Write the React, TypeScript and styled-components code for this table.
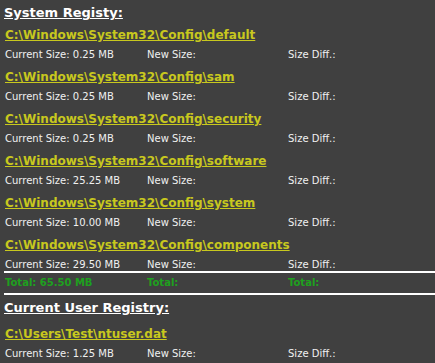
import React from "react";
import styled, { createGlobalStyle } from "styled-components";

const Global = createGlobalStyle`
  html, body { margin: 0; padding: 0; background: #404040; }
  body { font-family: "DejaVu Sans", Verdana, sans-serif; color: #f0f0f0; }
`;

const Page = styled.div`
  padding: 0 0 0 4px;
  width: 435px;
  box-sizing: border-box;
  display: flex;
  flex-direction: column;
`;

const Heading = styled.h2<{ $after?: number }>`
  margin: 0 0 ${(p) => p.$after ?? 0}px 0;
  padding-top: 1px;
  font-size: 13px;
  font-weight: bold;
  color: #ffffff;
  text-decoration: underline;
  line-height: 24px;
  height: 22px;
`;

const List = styled.div`
  display: flex;
  flex-direction: column;
  gap: 4px;
`;

const Entry = styled.div`
  display: flex;
  flex-direction: column;
`;

const PathLink = styled.a`
  font-size: 12px;
  font-weight: bold;
  color: #c8c81e;
  text-decoration: underline;
  line-height: 20px;
  padding: 2px 0 0 1px;
`;

const InfoRow = styled.div<{ $total?: boolean }>`
  display: grid;
  grid-template-columns: 142px 141px 1fr;
  font-size: 10px;
  line-height: ${(p) => (p.$total ? 20 : 12)}px;
  margin-top: ${(p) => (p.$total ? 0 : 4)}px;
  padding-left: 1px;
  color: ${(p) => (p.$total ? "#1ea01e" : "#f0f0f0")};
  font-weight: ${(p) => (p.$total ? "bold" : "normal")};
`;

const Divider = styled.div`
  height: 2px;
  background: #ffffff;
`;

const system = [
  ["default", "0.25 MB"],
  ["sam", "0.25 MB"],
  ["security", "0.25 MB"],
  ["software", "25.25 MB"],
  ["system", "10.00 MB"],
  ["components", "29.50 MB"],
];

function RegEntry({ path, size }: { path: string; size: string }) {
  return (
    <Entry>
      <PathLink>{path}</PathLink>
      <InfoRow>
        <span>Current Size: {size}</span>
        <span>New Size:</span>
        <span>Size Diff.:</span>
      </InfoRow>
    </Entry>
  );
}

export default function App() {
  return (
    <>
      <Global />
      <Page>
        <Heading>System Registy:</Heading>
        <List>
          {system.map(([name, size]) => (
            <RegEntry key={name} path={`C:\\Windows\\System32\\Config\\${name}`} size={size} />
          ))}
        </List>
        <Divider />
        <InfoRow $total>
          <span>Total: 65.50 MB</span>
          <span>Total:</span>
          <span>Total:</span>
        </InfoRow>
        <Divider />
        <Heading $after={4}>Current User Registry:</Heading>
        <RegEntry path={`C:\\Users\\Test\\ntuser.dat`} size="1.25 MB" />
      </Page>
    </>
  );
}
